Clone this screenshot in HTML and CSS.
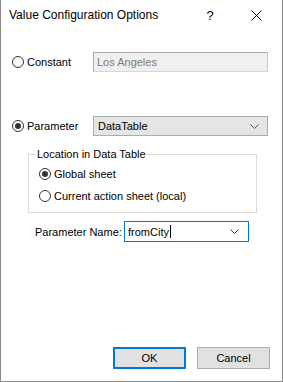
FILE: index.html
```html
<!DOCTYPE html>
<html>
<head>
<meta charset="utf-8">
<link rel="stylesheet" href="styles.css">
</head>
<body>
<div class="window">
  <div class="titlebar">
    <span class="title">Value Configuration Options</span>
    <span class="help">?</span>
    <span class="close">
      <svg width="11" height="11" viewBox="0 0 11 11"><path d="M0.5 0.5 L10.5 10.5 M10.5 0.5 L0.5 10.5" stroke="#000" stroke-width="1" fill="none"/></svg>
    </span>
  </div>

  <div class="row row-constant">
    <label class="radio"><span class="dot"></span><span>Constant</span></label>
    <div class="textbox disabled">Los Angeles</div>
  </div>

  <div class="row row-param">
    <label class="radio"><span class="dot checked"></span><span>Parameter</span></label>
    <div class="combo">
      <span>DataTable</span>
      <svg class="chev" width="9" height="5" viewBox="0 0 9 5"><path d="M0.5 0.5 L4.5 4.5 L8.5 0.5" stroke="#555" stroke-width="1" fill="none"/></svg>
    </div>
  </div>

  <fieldset class="group">
    <legend>Location in Data Table</legend>
    <label class="radio sub"><span class="dot checked"></span><span>Global sheet</span></label>
    <label class="radio sub"><span class="dot"></span><span>Current action sheet (local)</span></label>
  </fieldset>

  <div class="row row-name">
    <span class="name-label">Parameter Name:</span>
    <div class="combo edit">
      <span>fromCity</span><span class="caret"></span>
      <svg class="chev" width="9" height="5" viewBox="0 0 9 5"><path d="M0.5 0.5 L4.5 4.5 L8.5 0.5" stroke="#333" stroke-width="1" fill="none"/></svg>
    </div>
  </div>

  <div class="buttons">
    <button class="btn default">OK</button>
    <button class="btn">Cancel</button>
  </div>
</div>
</body>
</html>
```

FILE: styles.css
```css
html, body {
  margin: 0;
  padding: 0;
  background: #fff;
}
body {
  font-family: "Liberation Sans", Arial, sans-serif;
  font-size: 11px;
  color: #000;
}
.window {
  width: 283px;
  height: 382px;
  box-sizing: border-box;
  border: 1px solid #8a8a8a;
  border-top: none;
  display: flex;
  flex-direction: column;
  background: #fff;
}
.titlebar {
  height: 30px;
  display: flex;
  align-items: center;
  padding-left: 8px;
  flex: none;
}
.title {
  font-size: 12px;
  flex: 1;
}
.help {
  width: 46px;
  text-align: center;
  font-size: 13px;
}
.close {
  width: 46px;
  padding-right: 3px;
  display: flex;
  justify-content: center;
  align-items: center;
}
.row {
  display: flex;
  align-items: center;
  flex: none;
}
.radio {
  display: flex;
  align-items: center;
  gap: 3px;
}
.dot {
  width: 12px;
  height: 12px;
  box-sizing: border-box;
  border: 1px solid #333;
  border-radius: 50%;
  display: flex;
  align-items: center;
  justify-content: center;
  flex: none;
}
.dot.checked::after {
  content: "";
  width: 6px;
  height: 6px;
  border-radius: 50%;
  background: #333;
}
.row-constant {
  margin-top: 22px;
  height: 20px;
  padding-left: 11px;
}
.row-constant .radio, .row-param .radio {
  width: 81px;
}
.textbox {
  width: 175px;
  height: 20px;
  box-sizing: border-box;
  padding-left: 3px;
  display: flex;
  align-items: center;
}
.textbox.disabled {
  background: #f0f0f0;
  border: 1px solid #ababab;
  border-right-color: #c8c8c8;
  border-bottom-color: #d6d6d6;
  color: #7a7a7a;
}
.row-param {
  margin-top: 44px;
  height: 20px;
  padding-left: 11px;
}
.combo {
  width: 175px;
  height: 20px;
  box-sizing: border-box;
  background: #e5e5e5;
  border: 1px solid #acacac;
  padding: 0 8px 0 4px;
  display: flex;
  align-items: center;
}
.combo span:first-child {
  flex: none;
}
.chev {
  margin-left: auto;
}
.group {
  flex: none;
  margin: 11px 0 0 27px;
  width: 229px;
  box-sizing: border-box;
  border: 1px solid #dcdcdc;
  padding: 0 0 8px 8px;
  min-width: 0;
}
.group legend {
  padding: 0 1px;
  line-height: 14px;
  margin-left: -1px;
}
.radio.sub {
  height: 16px;
  margin-top: 5px;
  margin-left: 2px;
}
.radio.sub + .radio.sub {
  margin-top: 6px;
}
.row-name {
  margin-top: 8px;
  height: 21px;
  padding-left: 34px;
}
.name-label {
  width: 89px;
}
.combo.edit {
  width: 125px;
  height: 21px;
  background: #fff;
  border: 1px solid #0078d7;
  padding: 0 9px 0 3px;
}
.caret {
  width: 1px;
  height: 13px;
  background: #000;
  margin-left: 1px;
}
.buttons {
  margin-top: auto;
  margin-bottom: 12px;
  padding-right: 12px;
  display: flex;
  justify-content: flex-end;
  gap: 11px;
  flex: none;
}
.btn {
  width: 73px;
  height: 22px;
  box-sizing: border-box;
  background: #e1e1e1;
  border: 1px solid #adadad;
  font-family: "Liberation Sans", Arial, sans-serif;
  font-size: 11px;
  color: #000;
  padding: 0;
  margin: 0;
}
.btn.default {
  border: 2px solid #0078d7;
}
```
